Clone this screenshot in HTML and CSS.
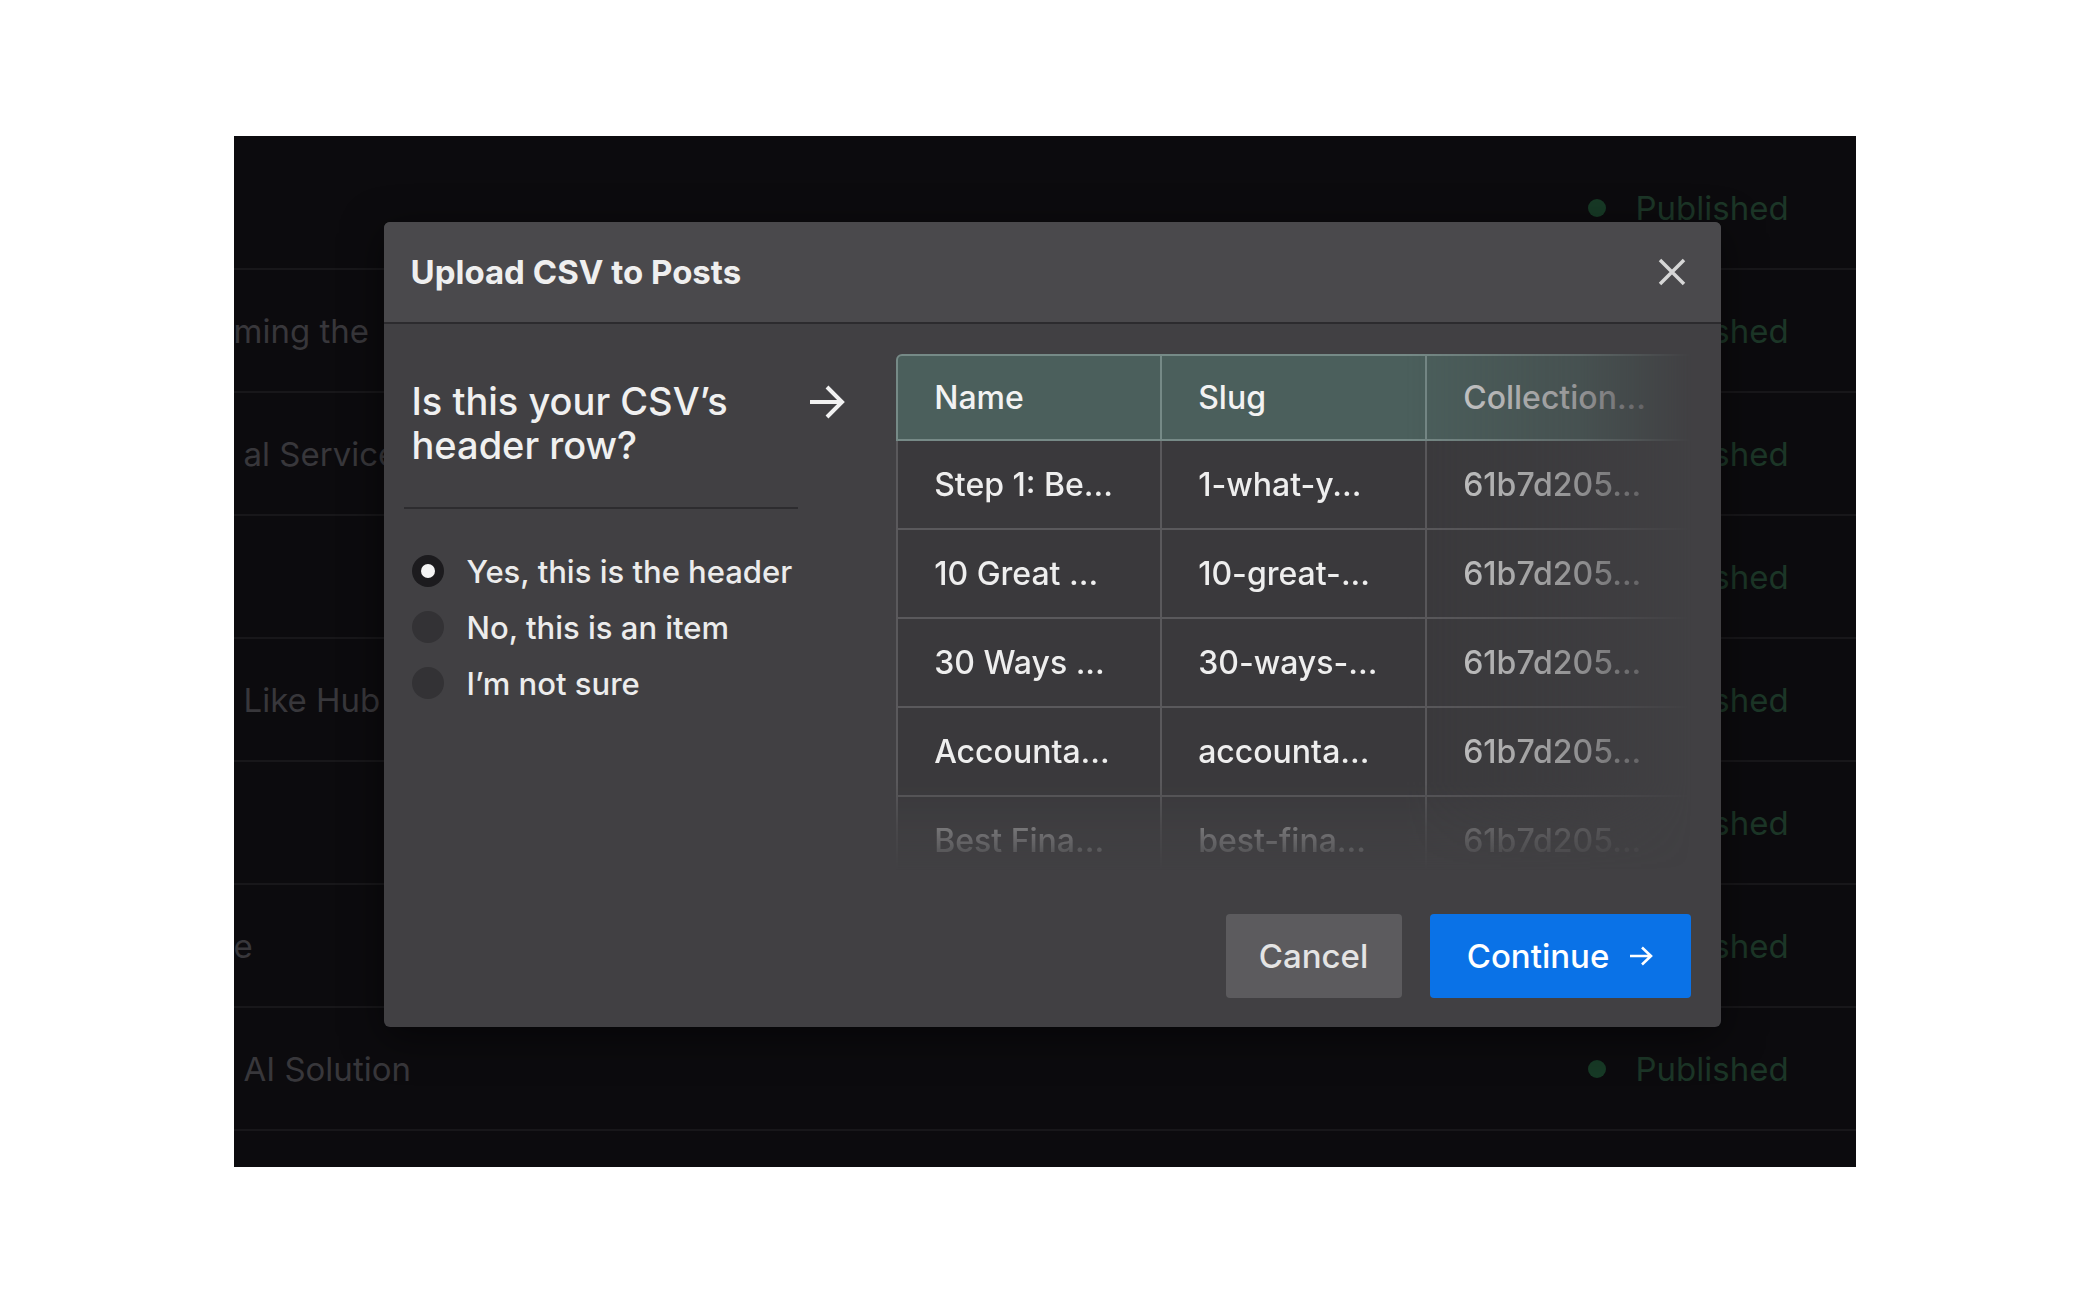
FILE: index.html
```html
<!DOCTYPE html>
<html lang="en">

<head>
    <meta charset="UTF-8">
    <meta name="viewport" content="width=device-width, initial-scale=1.0">
    <title>Upload CSV to Posts</title>
    <link rel="stylesheet" href="styles.css">
</head>

<body>
    <div class="frame">
        <div class="list">
            <div class="list-row"><span class="item-title"></span><span class="status"><i class="dot"></i>Published</span></div>
            <div class="list-row"><span class="item-title cut">ming the</span><span class="status"><i class="dot"></i>Published</span></div>
            <div class="list-row"><span class="item-title">al Service</span><span class="status"><i class="dot"></i>Published</span></div>
            <div class="list-row"><span class="item-title"></span><span class="status"><i class="dot"></i>Published</span></div>
            <div class="list-row"><span class="item-title">Like Hub</span><span class="status"><i class="dot"></i>Published</span></div>
            <div class="list-row"><span class="item-title"></span><span class="status"><i class="dot"></i>Published</span></div>
            <div class="list-row"><span class="item-title cut">e</span><span class="status"><i class="dot"></i>Published</span></div>
            <div class="list-row"><span class="item-title">AI Solution</span><span class="status"><i class="dot"></i>Published</span></div>
        </div>

        <div class="modal">
            <div class="modal-head">
                <span class="modal-title">Upload CSV to Posts</span>
                <svg class="close" viewBox="0 0 28 28">
                    <path d="M2 2 L26 26 M26 2 L2 26" />
                </svg>
            </div>

            <div class="modal-body">
                <div class="content">
                    <div class="question-col">
                        <div class="question">Is this your CSV’s header row?</div>
                        <div class="options">
                            <div class="option"><span class="radio checked"></span>Yes, this is the header</div>
                            <div class="option"><span class="radio"></span>No, this is an item</div>
                            <div class="option"><span class="radio"></span>I’m not sure</div>
                        </div>
                    </div>

                    <svg class="question-arrow" viewBox="0 0 36 36">
                        <path d="M1 18 H33 M18 3 L33 18 L18 33" />
                    </svg>

                    <div class="preview">
                        <div class="preview-fade">
                            <div class="sheet-row head">
                                <div class="cell">Name</div>
                                <div class="cell">Slug</div>
                                <div class="cell">Collection...</div>
                            </div>
                            <div class="sheet-row">
                                <div class="cell">Step 1: Be...</div>
                                <div class="cell">1-what-y...</div>
                                <div class="cell">61b7d205...</div>
                            </div>
                            <div class="sheet-row">
                                <div class="cell">10 Great ...</div>
                                <div class="cell">10-great-...</div>
                                <div class="cell">61b7d205...</div>
                            </div>
                            <div class="sheet-row">
                                <div class="cell">30 Ways ...</div>
                                <div class="cell">30-ways-...</div>
                                <div class="cell">61b7d205...</div>
                            </div>
                            <div class="sheet-row">
                                <div class="cell">Accounta...</div>
                                <div class="cell">accounta...</div>
                                <div class="cell">61b7d205...</div>
                            </div>
                            <div class="sheet-row">
                                <div class="cell">Best Fina...</div>
                                <div class="cell">best-fina...</div>
                                <div class="cell">61b7d205...</div>
                            </div>
                        </div>
                    </div>
                </div>

                <div class="actions">
                    <button class="btn btn-cancel">Cancel</button>
                    <button class="btn btn-continue">Continue
                        <svg class="btn-arrow" viewBox="0 0 24 20">
                            <path d="M1 10 H22 M13 1.5 L22 10 L13 18.5" />
                        </svg>
                    </button>
                </div>
            </div>
        </div>
    </div>
</body>

</html>
```

FILE: styles.css
```css
* {
    margin: 0px;
    padding: 0px;
    box-sizing: border-box;
}

body {
    background: #fff;
    font-family: "Inter", "Noto Sans", sans-serif;
}

.frame {
    position: relative;
    width: 1622px;
    height: 1031px;
    margin: 136px auto 0;
    background: #0c0b0e;
    overflow: hidden;
}

/* list behind the dialog */
.list {
    padding-top: 11px;
}

.list-row {
    display: flex;
    align-items: center;
    justify-content: space-between;
    height: 123px;
    border-bottom: 2px solid #18171a;
}

.item-title {
    width: 190px;
    padding-left: 10px;
    font-size: 33px;
    color: #38373b;
    white-space: nowrap;
    overflow: hidden;
}

.item-title.cut {
    padding-left: 0;
    width: 150px;
}

.status {
    width: 268px;
    display: flex;
    align-items: center;
    gap: 30px;
    font-size: 33px;
    color: #1c3627;
}

.dot {
    width: 18px;
    height: 18px;
    border-radius: 50%;
    background: #173a26;
}

/* dialog */
.modal {
    position: absolute;
    left: 150px;
    top: 86px;
    width: 1337px;
    height: 805px;
    background: #414043;
    border-radius: 6px;
    overflow: hidden;
    box-shadow: 0 10px 40px rgba(0, 0, 0, 0.5);
}

.modal-head {
    height: 102px;
    display: flex;
    align-items: center;
    justify-content: space-between;
    padding: 0 35px 0 27px;
    background: #4a494c;
    border-bottom: 2px solid #2c2b2e;
}

.modal-title {
    font-size: 33px;
    font-weight: 700;
    color: #efefef;
}

.close {
    width: 28px;
    height: 28px;
}

.close path {
    stroke: #d6d6d6;
    stroke-width: 3.5;
    fill: none;
}

.modal-body {
    padding: 30px 30px 29px 20px;
}

.content {
    display: flex;
    height: 516px;
}

.question-col {
    width: 395px;
    padding-top: 25px;
}

.question {
    padding: 0 8px 40px;
    font-size: 38px;
    line-height: 44px;
    font-weight: 500;
    color: #f0f0f0;
    border-bottom: 2px solid #2d2c2f;
}

.options {
    margin-top: 34px;
    padding-left: 8px;
}

.option {
    display: flex;
    align-items: center;
    gap: 23px;
    height: 56px;
    font-size: 31px;
    font-weight: 500;
    color: #ececec;
}

.radio {
    width: 32px;
    height: 32px;
    border-radius: 50%;
    background: #333235;
    flex-shrink: 0;
}

.radio.checked {
    background: #1c1b1e;
    display: flex;
    align-items: center;
    justify-content: center;
}

.radio.checked::after {
    content: "";
    width: 14px;
    height: 14px;
    border-radius: 50%;
    background: #f4f4f4;
}

.question-arrow {
    width: 36px;
    height: 36px;
    margin: 30px 51px 0 11px;
    flex-shrink: 0;
}

.question-arrow path {
    stroke: #f2f2f2;
    stroke-width: 4;
    fill: none;
}

/* csv preview */
.preview {
    width: 795px;
    height: 516px;
    overflow: hidden;
    -webkit-mask-image: linear-gradient(to right, #000 64%, rgba(0, 0, 0, 0.55) 86%, transparent 100%);
    mask-image: linear-gradient(to right, #000 64%, rgba(0, 0, 0, 0.55) 86%, transparent 100%);
}

.preview-fade {
    height: 100%;
    -webkit-mask-image: linear-gradient(to bottom, #000 83%, rgba(0, 0, 0, 0.3) 92%, transparent 100%);
    mask-image: linear-gradient(to bottom, #000 83%, rgba(0, 0, 0, 0.3) 92%, transparent 100%);
}

.sheet-row {
    display: grid;
    grid-template-columns: 266px 265px 264px;
    height: 89px;
}

.cell {
    display: flex;
    align-items: center;
    padding-left: 36px;
    background: #3a393c;
    border-right: 2px solid #5a595c;
    border-bottom: 2px solid #5a595c;
    font-size: 32px;
    font-weight: 500;
    color: #eeeeee;
    white-space: nowrap;
    overflow: hidden;
}

.cell:first-child {
    border-left: 2px solid #5a595c;
}

.cell:last-child {
    color: #d2d2d2;
}

.sheet-row.head {
    height: 87px;
}

.sheet-row.head .cell {
    background: #4b5f5c;
    border-color: #768a87;
    border-top: 2px solid #768a87;
    color: #f2f2f2;
}

.sheet-row.head .cell:first-child {
    border-top-left-radius: 6px;
}

.sheet-row.head .cell:last-child {
    color: #d8d8d8;
}

/* footer buttons */
.actions {
    display: flex;
    justify-content: flex-end;
    gap: 28px;
    margin-top: 44px;
}

.btn {
    height: 84px;
    border: none;
    outline: none;
    border-radius: 4px;
    font-family: inherit;
    font-size: 33px;
    font-weight: 500;
    color: #fff;
    cursor: pointer;
}

.btn-cancel {
    width: 176px;
    background: #5c5b5e;
    color: #e4e4e4;
}

.btn-continue {
    width: 261px;
    background: #0a72e7;
    display: flex;
    align-items: center;
    justify-content: center;
    gap: 20px;
}

.btn-arrow {
    width: 24px;
    height: 20px;
}

.btn-arrow path {
    stroke: #fff;
    stroke-width: 2.6;
    fill: none;
}
```
